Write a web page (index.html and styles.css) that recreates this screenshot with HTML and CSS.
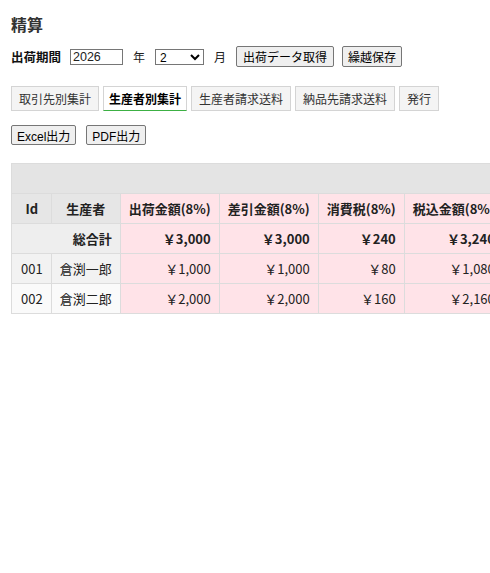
FILE: index.html
```html
<!DOCTYPE html>
<html lang="ja">
<head>
<meta charset="utf-8">
<title>精算</title>
<link rel="stylesheet" href="styles.css">
</head>
<body>
<div class="page">
  <h1 class="title">精算</h1>
  <div class="period">
    <span class="label">出荷期間</span>
    <input class="year" type="text" value="2026">
    <span class="unit">年</span>
    <select class="month"><option>2</option></select>
    <span class="unit">月</span>
    <button class="btn">出荷データ取得</button>
    <button class="btn">繰越保存</button>
  </div>
  <div class="tabs">
    <button class="tab">取引先別集計</button>
    <button class="tab active">生産者別集計</button>
    <button class="tab">生産者請求送料</button>
    <button class="tab">納品先請求送料</button>
    <button class="tab">発行</button>
  </div>
  <div class="exports">
    <button class="btn">Excel出力</button>
    <button class="btn">PDF出力</button>
  </div>
  <div class="table-wrap">
    <table class="grid">
      <thead>
        <tr class="band"><th colspan="7">&nbsp;</th></tr>
        <tr class="head">
          <th class="key id">Id</th>
          <th class="key">生産者</th>
          <th class="amt">出荷金額(8%)</th>
          <th class="amt">差引金額(8%)</th>
          <th class="amt">消費税(8%)</th>
          <th class="amt">税込金額(8%)</th>
          <th class="amt">出荷金額(10%)</th>
        </tr>
      </thead>
      <tbody>
        <tr class="total">
          <td class="key sum" colspan="2">総合計</td>
          <td class="amt">￥3,000</td>
          <td class="amt">￥3,000</td>
          <td class="amt">￥240</td>
          <td class="amt">￥3,240</td>
          <td class="amt">￥0</td>
        </tr>
        <tr class="odd">
          <td class="key id">001</td>
          <td class="key">倉渕一郎</td>
          <td class="amt">￥1,000</td>
          <td class="amt">￥1,000</td>
          <td class="amt">￥80</td>
          <td class="amt">￥1,080</td>
          <td class="amt">￥0</td>
        </tr>
        <tr class="even">
          <td class="key id">002</td>
          <td class="key">倉渕二郎</td>
          <td class="amt">￥2,000</td>
          <td class="amt">￥2,000</td>
          <td class="amt">￥160</td>
          <td class="amt">￥2,160</td>
          <td class="amt">￥0</td>
        </tr>
      </tbody>
    </table>
  </div>
</div>
</body>
</html>
```
FILE: styles.css
```css
html, body {
  margin: 0;
  padding: 0;
  background: #fff;
}
body {
  overflow: hidden;
  font-family: "Liberation Sans", "Noto Sans CJK JP", sans-serif;
  color: #333;
}
.page {
  padding: 14px 0 0 11px;
}
.title {
  margin: 0 0 9px;
  font-size: 16px;
  line-height: 23px;
  font-weight: bold;
  color: #333;
}
.period {
  display: flex;
  align-items: center;
  gap: 10px;
  height: 21px;
  font-size: 12px;
}
.label {
  font-size: 12.5px;
  font-weight: bold;
  color: #111;
  margin-right: -1px;
}
.unit {
  color: #222;
}
.year {
  box-sizing: border-box;
  width: 53px;
  height: 16px;
  margin: 0;
  padding: 0 2px;
  border: 1px solid #767676;
  font-family: "Liberation Sans", sans-serif;
  font-size: 12.5px;
  color: #222;
}
.month {
  box-sizing: border-box;
  width: 49px;
  height: 16px;
  margin: 0;
  padding: 0;
  border: 1px solid #767676;
  border-radius: 0;
  background: #fff;
  font-family: "Liberation Sans", sans-serif;
  font-size: 12px;
  color: #000;
}
.btn {
  box-sizing: border-box;
  height: 21px;
  margin: 0;
  padding: 0 6px;
  border: 1px solid #767676;
  border-radius: 2px;
  background: #efefef;
  font-family: "Liberation Sans", "Noto Sans CJK JP", sans-serif;
  font-size: 12px;
  color: #000;
}
.period .btn + .btn {
  margin-left: -2px;
  padding: 0 5px;
}
.tabs {
  display: flex;
  gap: 4px;
  margin-top: 19px;
}
.tab {
  box-sizing: border-box;
  height: 25px;
  margin: 0;
  padding: 0 7px;
  border: 1px solid #d4d4d4;
  border-radius: 0;
  background: #f4f4f4;
  font-family: "Liberation Sans", "Noto Sans CJK JP", sans-serif;
  font-size: 12px;
  color: #333;
}
.tab.active {
  background: #fff;
  border-bottom: 1px solid #3cb043;
  color: #000;
  font-weight: bold;
  padding: 0 5px;
}
.exports {
  display: flex;
  gap: 10px;
  margin-top: 14px;
}
.exports .btn {
  height: 20px;
  padding: 0 5px;
}
.table-wrap {
  margin-top: 18px;
  overflow: hidden;
}
.grid {
  border-collapse: collapse;
  font-family: "Noto Sans CJK JP", sans-serif;
  font-size: 13px;
  color: #222;
  white-space: nowrap;
}
.grid th,
.grid td {
  border: 1px solid #dcdcdc;
  padding: 5px 8px;
  line-height: 19px;
}
.grid .id {
  padding-left: 9px;
}
.grid th {
  font-weight: bold;
  text-align: center;
}
.band th {
  background: #e4e4e4;
}
.head .key {
  background: #e6e6e6;
}
.amt {
  background: #ffe3e8;
}
.grid td.amt {
  text-align: right;
}
.total td {
  font-weight: bold;
}
.total .sum {
  background: #eeeeee;
  text-align: right;
}
.odd .key {
  background: #f2f2f2;
}
.even .key {
  background: #fafafa;
}
.grid td.key {
  text-align: center;
}
.grid td.sum {
  text-align: right;
}
```
